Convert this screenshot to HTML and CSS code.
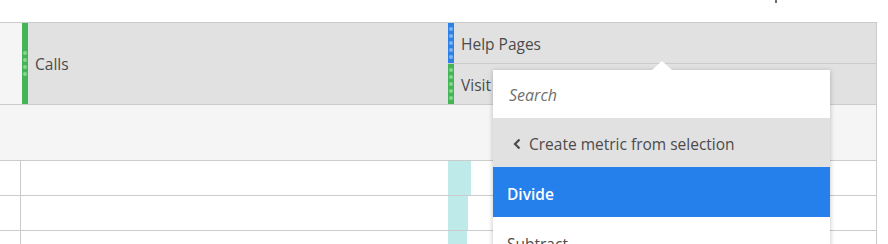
FILE: index.html
```html
<!DOCTYPE html>
<html lang="en">

<head>
    <meta charset="UTF-8" />
    <meta name="viewport" content="width=device-width, initial-scale=1.0" />
    <title>Freeform table</title>
    <link rel="stylesheet" href="styles.css">
</head>

<body>
    <div class="page">
        <div class="top-strip">
            <span class="top-mark"></span>
        </div>

        <div class="table">
            <!-- header -->
            <div class="head-row">
                <div class="gutter"></div>
                <div class="head-cell calls">
                    <span class="handle green"><i></i><i></i><i></i><i></i></span>
                    <span class="label">Calls</span>
                </div>
                <div class="head-metrics">
                    <div class="head-cell metric">
                        <span class="handle blue"><i></i><i></i><i></i><i></i><i></i></span>
                        <span class="label">Help Pages</span>
                    </div>
                    <div class="head-cell metric">
                        <span class="handle green"><i></i><i></i><i></i><i></i><i></i></span>
                        <span class="label">Visit</span>
                    </div>
                </div>
            </div>

            <!-- totals -->
            <div class="total-row"></div>

            <!-- rows -->
            <div class="data-row">
                <div class="row-gutter"></div>
                <div class="row-dim"></div>
                <div class="row-value"><span class="bar" style="width: 23px"></span></div>
            </div>
            <div class="data-row">
                <div class="row-gutter"></div>
                <div class="row-dim"></div>
                <div class="row-value"><span class="bar" style="width: 20px"></span></div>
            </div>
            <div class="data-row">
                <div class="row-gutter"></div>
                <div class="row-dim"></div>
                <div class="row-value"><span class="bar" style="width: 19px"></span></div>
            </div>
        </div>

        <!-- context menu -->
        <div class="menu">
            <div class="menu-search">Search</div>
            <div class="menu-back">
                <svg class="chev" width="8" height="12" viewBox="0 0 8 12">
                    <path d="M6.5 1.5 L2 6 L6.5 10.5" fill="none" stroke="#4b4b4b" stroke-width="2.2" />
                </svg>
                <span>Create metric from selection</span>
            </div>
            <div class="menu-item active">Divide</div>
            <div class="menu-item">Subtract</div>
        </div>
    </div>
</body>

</html>
```

FILE: styles.css
```css
body {
    margin: 0;
    background: #fff;
    font-family: "Open Sans", "Noto Sans", sans-serif;
    color: #4b4b4b;
    overflow: hidden;
}

.page {
    position: relative;
    width: 888px;
    height: 244px;
    overflow: hidden;
}

.top-strip {
    height: 22px;
    position: relative;
}

.top-mark {
    position: absolute;
    left: 775px;
    top: 0;
    width: 2px;
    height: 3px;
    background: #6e6e6e;
}

.table {
    width: 876px;
    border-top: 1px solid #cbcbcb;
    border-right: 1px solid #cbcbcb;
}

/* header */
.head-row {
    display: flex;
    height: 81px;
    border-bottom: 1px solid #cbcbcb;
    background: #e1e1e1;
}

.gutter {
    flex: 0 0 22px;
    background: #f5f5f5;
}

.head-cell {
    display: flex;
    align-items: center;
    gap: 7px;
    font-size: 15.5px;
}

.head-cell .label {
    padding-top: 1px;
}

.calls {
    flex: 0 0 426px;
}

.head-metrics {
    flex: 1;
    display: flex;
    flex-direction: column;
}

.metric {
    height: 40px;
}

.metric + .metric {
    border-top: 1px solid #cbcbcb;
}

.handle {
    align-self: stretch;
    width: 6px;
    display: flex;
    flex-direction: column;
    align-items: center;
    justify-content: center;
    gap: 3px;
}

.handle i {
    width: 4px;
    height: 4px;
    border-radius: 50%;
}

.handle.green {
    background: #44b556;
}

.handle.green i {
    background: #86d68f;
}

.handle.blue {
    background: #2d80e6;
}

.handle.blue i {
    background: #7fb4f2;
}

/* totals */
.total-row {
    height: 55px;
    background: #f5f5f5;
    border-bottom: 1px solid #cbcbcb;
}

/* data rows */
.data-row {
    display: flex;
    height: 34px;
    border-bottom: 1px solid #cbcbcb;
}

.row-gutter {
    flex: 0 0 20px;
    border-right: 1px solid #cbcbcb;
}

.row-dim {
    flex: 0 0 427px;
}

.row-value {
    flex: 1;
    display: flex;
}

.bar {
    background: #bfeaea;
}

/* menu */
.menu {
    position: absolute;
    left: 493px;
    top: 70px;
    width: 337px;
    background: #fff;
    box-shadow: 0 1px 5px rgba(0, 0, 0, 0.25);
}

.menu::before {
    content: "";
    position: absolute;
    top: -9px;
    left: 159px;
    border-left: 10px solid transparent;
    border-right: 10px solid transparent;
    border-bottom: 9px solid #fff;
}

.menu-search {
    height: 48px;
    display: flex;
    align-items: center;
    padding-left: 16px;
    padding-top: 2px;
    box-sizing: border-box;
    font-style: italic;
    font-size: 16px;
    color: #707070;
}

.menu-back {
    height: 49px;
    display: flex;
    align-items: center;
    gap: 8px;
    padding-left: 20px;
    padding-top: 3px;
    box-sizing: border-box;
    background: #e1e1e1;
    font-size: 15.5px;
}

.menu-item {
    height: 50px;
    display: flex;
    align-items: center;
    padding-left: 14px;
    padding-top: 4px;
    box-sizing: border-box;
    font-size: 15.5px;
}

.menu-item.active {
    background: #2680eb;
    color: #fff;
    font-weight: 600;
}
```
